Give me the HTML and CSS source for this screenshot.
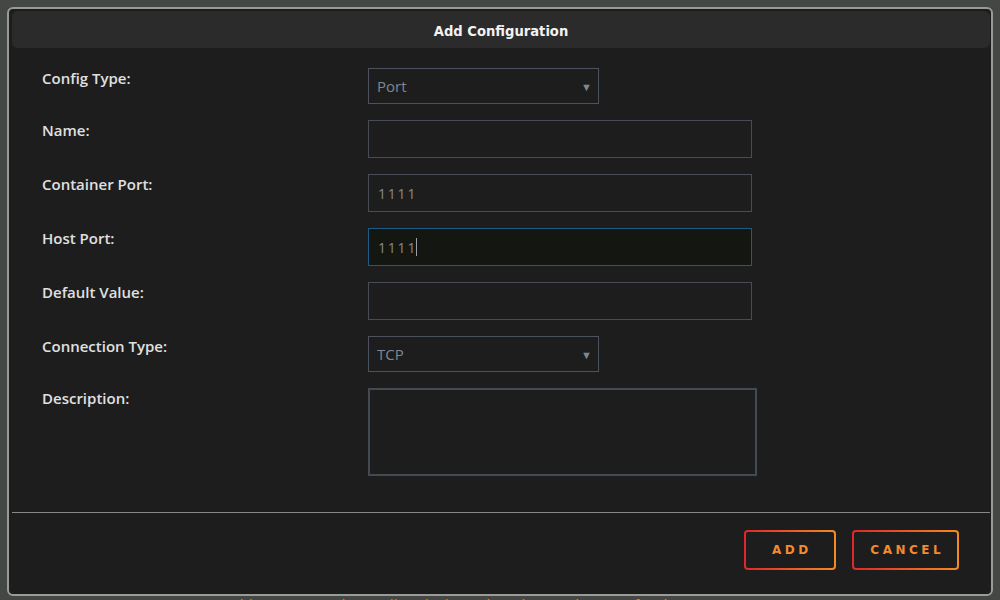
FILE: index.html
```html
<!DOCTYPE html>
<html lang="en">
<head>
  <meta charset="UTF-8" />
  <title>Add Configuration</title>
  <link rel="stylesheet" href="styles.css">
</head>
<body>

  <div class="dialog">
    <div class="dialog-title">Add Configuration</div>

    <form class="config-form">
      <label>Config Type:</label>
      <div class="select small">
        <span>Port</span>
        <span class="arrow">&#9660;</span>
      </div>

      <label>Name:</label>
      <div class="field"></div>

      <label>Container Port:</label>
      <div class="field"><span class="value">1111</span></div>

      <label>Host Port:</label>
      <div class="field focused"><span class="value">1111</span><span class="caret"></span></div>

      <label>Default Value:</label>
      <div class="field"></div>

      <label>Connection Type:</label>
      <div class="select small">
        <span>TCP</span>
        <span class="arrow">&#9660;</span>
      </div>

      <label>Description:</label>
      <div class="field area"></div>
    </form>

    <div class="dialog-footer">
      <button type="button" class="btn btn-add">ADD</button>
      <button type="button" class="btn btn-cancel">CANCEL</button>
    </div>
  </div>

  <p class="note">qbittorrent needs to talk to jackett, thus the requirement for the output port.</p>

</body>
</html>
```

FILE: styles.css
```css
* { box-sizing: border-box; }
html, body { height: 100%; }
body {
  margin: 0;
  background: #454744;
  font-family: 'Open Sans', 'Noto Sans', sans-serif;
  color: #ddd;
  overflow: hidden;
}
.dialog {
  margin: 7px 7px 0 7px;
  height: 589px;
  background: #1d1d1d;
  border: 2px solid #9a9b99;
  border-radius: 6px;
  padding: 2px 1px 0 3px;
  display: flex;
  flex-direction: column;
}
.dialog-title {
  height: 37px;
  padding-top: 2px;
  background: #2b2b2b;
  border-radius: 6px;
  display: flex;
  align-items: center;
  justify-content: center;
  font-family: 'DejaVu Sans Condensed', 'DejaVu Sans', sans-serif;
  font-weight: bold;
  font-size: 14.6px;
  color: #f2f2f2;
}
.config-form {
  display: grid;
  grid-template-columns: 326px 1fr;
  row-gap: 16px;
  padding: 20px 0 0 30px;
  align-items: start;
}
.config-form label {
  font-size: 15px;
  font-weight: 600;
  line-height: 20px;
  color: #e0e0e0;
}
.field, .select {
  height: 38px;
  width: 384px;
  border: 1px solid #474c55;
  background: #1d1d1d;
  display: flex;
  align-items: center;
  padding: 0 9px;
  font-size: 15px;
  color: #7e8792;
}
.select.small {
  width: 231px;
  height: 36px;
  border-color: #4b525e;
  justify-content: space-between;
  padding: 0 6px 0 8px;
}
.arrow {
  font-size: 11px;
  color: #7e8792;
}
.value {
  font-size: 14px;
  letter-spacing: 1.8px;
  color: #858a8f;
}
.field.focused {
  background: #141612;
  border-color: #1c5a88;
}
.caret {
  width: 1px;
  height: 18px;
  background: #9aa0a6;
  margin-left: -1px;
}
.field.area {
  width: 389px;
  height: 88px;
  border: 2px solid #434a54;
}
.dialog-footer {
  margin-top: 36px;
  border-top: 1px solid #888;
  display: flex;
  justify-content: flex-end;
  gap: 16px;
  padding: 17px 31px 0 0;
}
.btn {
  height: 40px;
  padding: 0 0 0 3.5px;
  border: 2px solid transparent;
  border-radius: 4px;
  background:
    linear-gradient(#1d1d1d, #1d1d1d) padding-box,
    linear-gradient(90deg, #e0262a, #f58a22) border-box;
  color: #f38a2c;
  font-family: 'DejaVu Sans', sans-serif;
  font-weight: bold;
  font-size: 12px;
  letter-spacing: 3.5px;
  cursor: pointer;
}
.btn-add { width: 92px; }
.btn-cancel { width: 107px; }
.note {
  margin: 0;
  text-align: center;
  font-size: 14px;
  line-height: 18px;
  color: #c9892c;
  font-family: 'DejaVu Sans', sans-serif;
}
```
